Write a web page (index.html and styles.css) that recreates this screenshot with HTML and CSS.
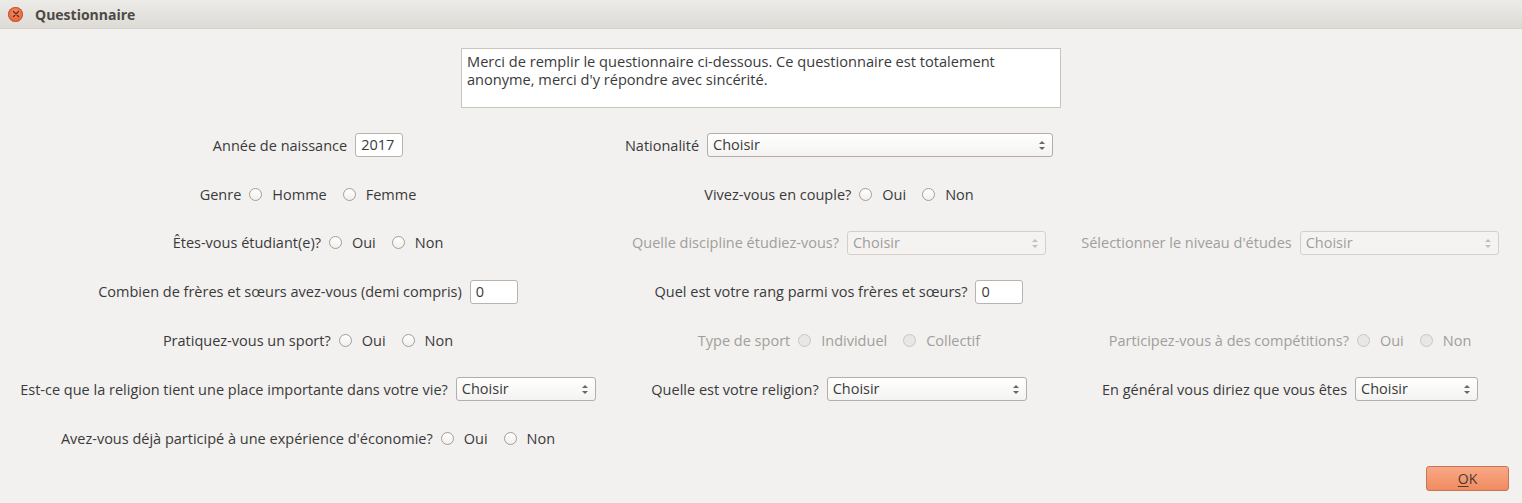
FILE: index.html
```html
<!DOCTYPE html>
<html lang="fr">
<head>
<meta charset="utf-8">
<title>Questionnaire</title>
<link rel="stylesheet" href="styles.css">
</head>
<body>
<div class="window">
  <div class="titlebar">
    <span class="close"><svg width="8" height="8" viewBox="0 0 8 8"><path d="M1.5 1.5L6.5 6.5M6.5 1.5L1.5 6.5" stroke="#5a2a1a" stroke-width="1.2" stroke-linecap="round"/></svg></span>
    <span class="title">Questionnaire</span>
  </div>
  <div class="content">
    <div class="intro">Merci de remplir le questionnaire ci-dessous. Ce questionnaire est totalement<br>anonyme, merci d'y répondre avec sincérité.</div>
    <div class="grid">
      <div class="cell"><span class="lbl">Année de naissance</span><span class="edit">2017</span></div>
      <div class="cell"><span class="lbl">Nationalité</span><span class="combo w346">Choisir<i class="arrows"></i></span></div>
      <div class="cell"></div>

      <div class="cell"><span class="lbl">Genre</span><span class="radio"></span><span class="opt">Homme</span><span class="radio"></span><span class="opt">Femme</span></div>
      <div class="cell"><span class="lbl">Vivez-vous en couple?</span><span class="radio"></span><span class="opt">Oui</span><span class="radio"></span><span class="opt">Non</span></div>
      <div class="cell"></div>

      <div class="cell"><span class="lbl">Êtes-vous étudiant(e)?</span><span class="radio"></span><span class="opt">Oui</span><span class="radio"></span><span class="opt">Non</span></div>
      <div class="cell disabled"><span class="lbl">Quelle discipline étudiez-vous?</span><span class="combo w199">Choisir<i class="arrows"></i></span></div>
      <div class="cell disabled"><span class="lbl">Sélectionner le niveau d'études</span><span class="combo w199">Choisir<i class="arrows"></i></span></div>

      <div class="cell"><span class="lbl">Combien de frères et sœurs avez-vous (demi compris)</span><span class="edit">0</span></div>
      <div class="cell"><span class="lbl">Quel est votre rang parmi vos frères et sœurs?</span><span class="edit">0</span></div>
      <div class="cell"></div>

      <div class="cell"><span class="lbl">Pratiquez-vous un sport?</span><span class="radio"></span><span class="opt">Oui</span><span class="radio"></span><span class="opt">Non</span></div>
      <div class="cell disabled"><span class="lbl">Type de sport</span><span class="radio"></span><span class="opt">Individuel</span><span class="radio"></span><span class="opt">Collectif</span></div>
      <div class="cell disabled"><span class="lbl">Participez-vous à des compétitions?</span><span class="radio"></span><span class="opt">Oui</span><span class="radio"></span><span class="opt">Non</span></div>

      <div class="cell"><span class="lbl">Est-ce que la religion tient une place importante dans votre vie?</span><span class="combo w140">Choisir<i class="arrows"></i></span></div>
      <div class="cell"><span class="lbl">Quelle est votre religion?</span><span class="combo w200">Choisir<i class="arrows"></i></span></div>
      <div class="cell"><span class="lbl">En général vous diriez que vous êtes</span><span class="combo w123">Choisir<i class="arrows"></i></span></div>

      <div class="cell"><span class="lbl">Avez-vous déjà participé à une expérience d'économie?</span><span class="radio"></span><span class="opt">Oui</span><span class="radio"></span><span class="opt">Non</span></div>
      <div class="cell"></div>
      <div class="cell"></div>
    </div>
    <div class="footer"><span class="ok"><u>O</u>K</span></div>
  </div>
</div>
</body>
</html>
```

FILE: styles.css
```css
html, body {
  margin: 0;
  padding: 0;
}
body {
  width: 1522px;
  height: 503px;
  overflow: hidden;
  background: #f2f1f0;
  font-family: "Open Sans", "DejaVu Sans", sans-serif;
  font-size: 14.5px;
  color: #3a3a3a;
}
.window {
  display: flex;
  flex-direction: column;
  height: 503px;
}
.titlebar {
  height: 29px;
  flex: none;
  display: flex;
  align-items: center;
  background: linear-gradient(#ecebe8, #dedbd6);
  border-bottom: 1px solid #d4d0ca;
  box-sizing: border-box;
}
.close {
  width: 15px;
  height: 15px;
  margin-left: 8px;
  border-radius: 50%;
  background: radial-gradient(circle at 50% 35%, #f58a62, #e2592c);
  box-shadow: 0 0 0 1px #c55a36 inset;
  display: flex;
  align-items: center;
  justify-content: center;
}
.title {
  margin-left: 12px;
  font-weight: bold;
  font-size: 14px;
  color: #4c4944;
}
.content {
  flex: 1;
  display: flex;
  flex-direction: column;
}
.intro {
  align-self: center;
  width: 600px;
  height: 60px;
  box-sizing: border-box;
  margin-top: 19px;
  background: #ffffff;
  border: 1px solid #c9c4be;
  padding: 3px 5px;
  line-height: 18px;
  font-size: 14.6px;
}
.grid {
  display: grid;
  grid-template-columns: 596px 466px 436px;
  grid-auto-rows: 48.8px;
  padding-left: 10px;
  margin-top: 13px;
}
.cell {
  display: flex;
  align-items: center;
  justify-content: center;
  white-space: nowrap;
}
.lbl {
  margin-right: 8px;
}
.opt {
  margin-left: 10px;
  margin-right: 16px;
}
.opt:last-child {
  margin-right: 0;
}
.radio {
  width: 13px;
  height: 13px;
  box-sizing: border-box;
  border-radius: 50%;
  border: 1px solid #a39e98;
  background: linear-gradient(#ffffff, #f1f0ee);
  flex: none;
}
.edit {
  width: 48px;
  height: 24px;
  box-sizing: border-box;
  border: 1px solid #b8b3ad;
  border-radius: 3px;
  background: #ffffff;
  padding-left: 5px;
  line-height: 22px;
}
.combo {
  position: relative;
  height: 24px;
  box-sizing: border-box;
  border: 1px solid #b3aea8;
  border-radius: 3px;
  background: linear-gradient(#ffffff, #f4f3f2);
  padding-left: 5px;
  line-height: 22px;
}
.w346 { width: 346px; }
.w199 { width: 199px; }
.w200 { width: 200px; }
.w140 { width: 140px; }
.w123 { width: 123px; }
.arrows {
  position: absolute;
  right: 7px;
  top: 7px;
  width: 6px;
  height: 9px;
}
.arrows::before,
.arrows::after {
  content: "";
  position: absolute;
  left: 0;
  border-left: 3px solid transparent;
  border-right: 3px solid transparent;
}
.arrows::before {
  top: 0;
  border-bottom: 3px solid #6a6661;
}
.arrows::after {
  bottom: 0;
  border-top: 3px solid #6a6661;
}
.disabled {
  color: #a19e9a;
}
.disabled .radio {
  border-color: #c9c5c0;
  background: #e9e7e5;
}
.disabled .combo {
  border-color: #d3cfca;
  background: #f4f3f2;
}
.disabled .arrows::before { border-bottom-color: #c2beb9; }
.disabled .arrows::after { border-top-color: #c2beb9; }
.footer {
  display: flex;
  justify-content: flex-end;
  padding-right: 13px;
  margin-top: 3px;
}
.ok {
  width: 83px;
  height: 25px;
  box-sizing: border-box;
  border: 1px solid #c47656;
  border-radius: 3px;
  background: linear-gradient(#f9a886, #f08b60);
  display: flex;
  align-items: center;
  justify-content: center;
  color: #4a3a33;
  font-size: 14px;
}
.ok u {
  text-decoration-thickness: 1px;
  text-underline-offset: 2px;
}
```
